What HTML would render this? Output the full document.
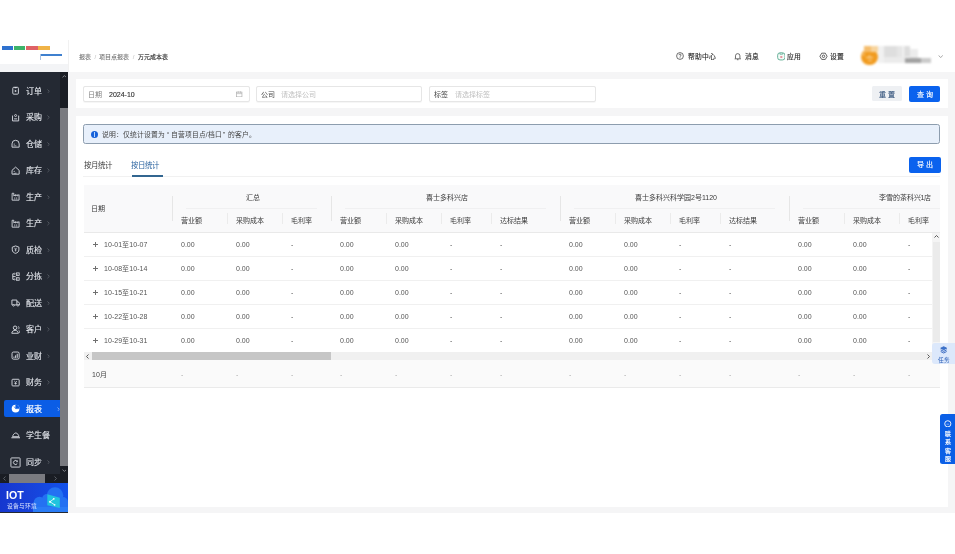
<!DOCTYPE html>
<html lang="zh-CN"><head><meta charset="utf-8">
<style>
*{box-sizing:border-box;margin:0;padding:0}
html,body{width:955px;height:554px;overflow:hidden;background:#fff}
body{position:relative;font-family:"Liberation Sans",sans-serif;color:#333}
.a{position:absolute}
.t{position:absolute;white-space:nowrap;line-height:1;will-change:transform}
.b{-webkit-text-stroke:0.2px currentColor}
svg.a{display:block}
</style></head><body>
<div class="a" style="left:0.00px;top:40.00px;width:955.00px;height:32.00px;background:#fff;"></div>
<div class="a" style="left:2.00px;top:45.60px;width:11.00px;height:4.20px;background:#2f72cf;"></div>
<div class="a" style="left:14.00px;top:45.60px;width:11.00px;height:4.20px;background:#3db36a;"></div>
<div class="a" style="left:26.00px;top:45.60px;width:11.50px;height:4.20px;background:#df6266;"></div>
<div class="a" style="left:38.00px;top:45.60px;width:12.00px;height:4.20px;background:#f0b347;"></div>
<div class="a" style="left:40.00px;top:54.40px;width:22.00px;height:1.40px;background:#3f80cf;"></div>
<div class="a" style="left:40.00px;top:54.40px;width:1.20px;height:5.50px;background:#a8c2e2;"></div>
<div class="a" style="left:0.00px;top:63.60px;width:68.00px;height:8.40px;background:#f3f4f6;"></div>
<div class="a" style="left:68.00px;top:40.00px;width:0.80px;height:32.00px;background:#f1f1f1;"></div>
<div class="t" style="left:78.50px;top:53.65px;font-size:6px;color:#727272;"><span style="-webkit-text-stroke:0.08px #727272">报表</span><span style="color:#bdbdbd;margin:0 3.3px 0 3.4px">/</span><span style="-webkit-text-stroke:0.08px #727272">项目点报表</span><span style="color:#bdbdbd;margin:0 3.3px 0 3.4px">/</span><span style="color:#1a1a1a;-webkit-text-stroke:0.1px #1a1a1a">万元成本表</span></div>
<svg class="a" style="left:675.60px;top:52.30px;" width="8" height="8" viewBox="0 0 16 16"><circle cx="8" cy="8" r="6.8" fill="none" stroke="#333333" stroke-width="1.4"/><path d="M5.9 6.3a2.1 2.1 0 1 1 2.8 2c-.5.2-.7.5-.7 1.1" fill="none" stroke="#333333" stroke-width="1.4"/><circle cx="8" cy="11.6" r=".9" fill="#333333"/></svg>
<div class="t" style="left:688.30px;top:53.85px;font-size:6.8px;color:#262626;"><span style="-webkit-text-stroke:0.12px #262626">帮助中心</span></div>
<svg class="a" style="left:734.30px;top:52.00px;" width="7.4" height="8.6" viewBox="0 0 16 18"><path d="M3.2 13.2V8a4.8 4.8 0 0 1 9.6 0v5.2l1.4 1.2H1.8z M6.3 16.4h3.4" fill="none" stroke="#333333" stroke-width="1.5" stroke-linejoin="round"/></svg>
<div class="t" style="left:744.90px;top:53.85px;font-size:6.8px;color:#262626;"><span style="-webkit-text-stroke:0.12px #262626">消息</span></div>
<svg class="a" style="left:776.70px;top:52.00px;" width="8.6" height="8.6" viewBox="0 0 16 16"><rect x="1.2" y="1.5" width="13.6" height="13.3" rx="4.5" fill="#f4fbf8" stroke="#5aaa90" stroke-width="1.7"/><path d="M5.5 1.8v2.4h5V1.8" fill="none" stroke="#5aaa90" stroke-width="1.3"/><ellipse cx="8" cy="9.3" rx="2.4" ry="1.3" fill="#e06a78"/></svg>
<div class="t" style="left:787.30px;top:53.85px;font-size:6.8px;color:#262626;"><span style="-webkit-text-stroke:0.12px #262626">应用</span></div>
<svg class="a" style="left:819.40px;top:51.60px;" width="9" height="8.6" viewBox="0 0 16 16"><path d="M1.3 8L4.65 2.2h6.7L14.7 8l-3.35 5.8h-6.7z" fill="none" stroke="#333333" stroke-width="1.4" stroke-linejoin="round"/><circle cx="8" cy="8" r="2.3" fill="none" stroke="#333333" stroke-width="1.4"/></svg>
<div class="t" style="left:830.20px;top:53.85px;font-size:6.8px;color:#262626;"><span style="-webkit-text-stroke:0.12px #262626">设置</span></div>
<div class="a" style="left:0;top:0;width:955px;height:80px;filter:blur(0.9px)">
<div class="a" style="left:861.20px;top:49.40px;width:16.40px;height:15.80px;background:#f19b1f;border-radius:50%"></div>
<div class="a" style="left:864.00px;top:46.20px;width:7.00px;height:6.00px;background:#f5bd6c;"></div>
<div class="a" style="left:871.00px;top:46.20px;width:6.50px;height:5.50px;background:#f8d49c;"></div>
<div class="a" style="left:861.50px;top:51.80px;width:3.50px;height:4.50px;background:#f4b04e;"></div>
<div class="a" style="left:866.00px;top:56.80px;width:7.20px;height:1.60px;background:#fde0ad;border-radius:1px"></div>
<div class="a" style="left:867.60px;top:59.60px;width:4.60px;height:1.40px;background:#fbd39a;border-radius:1px"></div>
<div class="a" style="left:868.90px;top:54.80px;width:1.50px;height:1.80px;background:#fbd39a;"></div>
<div class="a" style="left:877.60px;top:46.20px;width:6.80px;height:17.00px;background:#f1f1f1;"></div>
<div class="a" style="left:884.40px;top:46.20px;width:12.80px;height:11.20px;background:#dedede;"></div>
<div class="a" style="left:897.20px;top:46.20px;width:6.30px;height:11.20px;background:#e6e6e6;"></div>
<div class="a" style="left:903.50px;top:46.20px;width:6.50px;height:11.20px;background:#dddddd;"></div>
<div class="a" style="left:910.00px;top:48.50px;width:8.30px;height:9.00px;background:#ececec;"></div>
<div class="a" style="left:884.40px;top:57.40px;width:20.60px;height:6.00px;background:#ebebeb;"></div>
<div class="a" style="left:905.00px;top:58.20px;width:16.00px;height:5.20px;background:#a2a2a2;"></div>
<div class="a" style="left:921.00px;top:58.20px;width:10.40px;height:5.20px;background:#cbcbcb;"></div>
<div class="a" style="left:910.00px;top:57.40px;width:8.30px;height:0.80px;background:#e7e7e7;"></div>
</div>
<svg class="a" style="left:937.70px;top:54.60px;" width="5.4" height="3.4" viewBox="0 0 12 8"><path d="M1 1l5 5 5-5" fill="none" stroke="#7a7a7a" stroke-width="1.6"/></svg>
<div class="a" style="left:0.00px;top:72.00px;width:68.00px;height:440.50px;background:#242933;"></div>
<div class="a" style="left:60.00px;top:72.00px;width:8.00px;height:402.40px;background:#1a1d24;"></div>
<div class="a" style="left:60.00px;top:108.30px;width:8.00px;height:357.40px;background:#7a7b80;"></div>
<svg class="a" style="left:61.60px;top:74.80px;" width="4.8" height="3" viewBox="0 0 10 6"><path d="M1 5l4-4 4 4" fill="none" stroke="#8d9097" stroke-width="1.8"/></svg>
<svg class="a" style="left:61.60px;top:468.60px;" width="4.8" height="3" viewBox="0 0 10 6"><path d="M1 1l4 4 4-4" fill="none" stroke="#8d9097" stroke-width="1.8"/></svg>
<div class="a" style="left:0.00px;top:474.40px;width:68.00px;height:8.60px;background:#1a1d24;"></div>
<div class="a" style="left:8.90px;top:474.40px;width:36.30px;height:8.60px;background:#7a7b80;"></div>
<svg class="a" style="left:3.20px;top:476.30px;" width="3" height="5" viewBox="0 0 6 10"><path d="M5 1L1 5l4 4" fill="none" stroke="#5f636b" stroke-width="1.8"/></svg>
<svg class="a" style="left:54.00px;top:476.30px;" width="3" height="5" viewBox="0 0 6 10"><path d="M1 1l4 4-4 4" fill="none" stroke="#5f636b" stroke-width="1.8"/></svg>
<svg class="a" style="left:10.80px;top:86.40px;" width="9.2" height="9.2" viewBox="0 0 18 18"><rect x="3.5" y="2.5" width="11" height="13.5" rx="2" fill="none" stroke="#d9dce3" stroke-width="1.8"/><path d="M6.5 1.8h5l-.8 2.6H7.3z" fill="#d9dce3"/><path d="M7.5 7.5l4 2.3-4 2.3z" fill="#d9dce3"/></svg>
<div class="t" style="left:25.50px;top:87.95px;font-size:8px;color:#e4e7ed;"><span style="-webkit-text-stroke:0.1px #e4e7ed">订单</span></div>
<svg class="a" style="left:47.20px;top:88.70px;" width="2.8" height="4.6" viewBox="0 0 6 10"><path d="M1 1l4 4-4 4" fill="none" stroke="#6f747d" stroke-width="1.3"/></svg>
<svg class="a" style="left:10.80px;top:112.90px;" width="9.2" height="9.2" viewBox="0 0 18 18"><path d="M3 6.5v9h12v-9" fill="none" stroke="#d9dce3" stroke-width="1.8" stroke-linejoin="round"/><circle cx="3" cy="6" r="1.2" fill="#d9dce3"/><circle cx="15" cy="6" r="1.2" fill="#d9dce3"/><circle cx="9" cy="5" r="2" fill="none" stroke="#d9dce3" stroke-width="1.6"/><path d="M6 11.5h6" stroke="#d9dce3" stroke-width="1.8"/></svg>
<div class="t" style="left:25.50px;top:114.45px;font-size:8px;color:#e4e7ed;"><span style="-webkit-text-stroke:0.1px #e4e7ed">采购</span></div>
<svg class="a" style="left:47.20px;top:115.20px;" width="2.8" height="4.6" viewBox="0 0 6 10"><path d="M1 1l4 4-4 4" fill="none" stroke="#6f747d" stroke-width="1.3"/></svg>
<svg class="a" style="left:10.80px;top:139.40px;" width="9.2" height="9.2" viewBox="0 0 18 18"><path d="M2 16V9.5a7 7 0 0 1 14 0V16z" fill="none" stroke="#d9dce3" stroke-width="1.8" stroke-linejoin="round"/><circle cx="6.2" cy="10" r="1.1" fill="#d9dce3"/><circle cx="6.2" cy="13.2" r="1.1" fill="#d9dce3"/><circle cx="9.4" cy="13.2" r="1.1" fill="#d9dce3"/></svg>
<div class="t" style="left:25.50px;top:140.95px;font-size:8px;color:#e4e7ed;"><span style="-webkit-text-stroke:0.1px #e4e7ed">仓储</span></div>
<svg class="a" style="left:47.20px;top:141.70px;" width="2.8" height="4.6" viewBox="0 0 6 10"><path d="M1 1l4 4-4 4" fill="none" stroke="#6f747d" stroke-width="1.3"/></svg>
<svg class="a" style="left:10.80px;top:165.90px;" width="9.2" height="9.2" viewBox="0 0 18 18"><path d="M2 16V8.5L9 2.2l7 6.3V16z" fill="none" stroke="#d9dce3" stroke-width="1.8" stroke-linejoin="round"/><circle cx="6.2" cy="10.5" r="1.1" fill="#d9dce3"/><path d="M6.2 16v-2.5M9.5 16v-3" stroke="#d9dce3" stroke-width="1.6"/></svg>
<div class="t" style="left:25.50px;top:167.45px;font-size:8px;color:#e4e7ed;"><span style="-webkit-text-stroke:0.1px #e4e7ed">库存</span></div>
<svg class="a" style="left:47.20px;top:168.20px;" width="2.8" height="4.6" viewBox="0 0 6 10"><path d="M1 1l4 4-4 4" fill="none" stroke="#6f747d" stroke-width="1.3"/></svg>
<svg class="a" style="left:10.80px;top:192.40px;" width="9.2" height="9.2" viewBox="0 0 18 18"><path d="M2.2 16V2.5h3.3v5.3l3.4-2.6v2.6l3.4-2.6v2.6l3.5-2.6V16z" fill="none" stroke="#d9dce3" stroke-width="1.7" stroke-linejoin="round"/><path d="M6.2 11.6h2.2M10 11.6h2.2M6.2 13.6h2.2M10 13.6h2.2" stroke="#d9dce3" stroke-width="1.3"/></svg>
<div class="t" style="left:25.50px;top:193.95px;font-size:8px;color:#e4e7ed;"><span style="-webkit-text-stroke:0.1px #e4e7ed">生产</span></div>
<svg class="a" style="left:47.20px;top:194.70px;" width="2.8" height="4.6" viewBox="0 0 6 10"><path d="M1 1l4 4-4 4" fill="none" stroke="#6f747d" stroke-width="1.3"/></svg>
<svg class="a" style="left:10.80px;top:218.90px;" width="9.2" height="9.2" viewBox="0 0 18 18"><path d="M2.2 16V2.5h3.3v5.3l3.4-2.6v2.6l3.4-2.6v2.6l3.5-2.6V16z" fill="none" stroke="#d9dce3" stroke-width="1.7" stroke-linejoin="round"/><path d="M6.2 11.6h2.2M10 11.6h2.2M6.2 13.6h2.2M10 13.6h2.2" stroke="#d9dce3" stroke-width="1.3"/></svg>
<div class="t" style="left:25.50px;top:220.45px;font-size:8px;color:#e4e7ed;"><span style="-webkit-text-stroke:0.1px #e4e7ed">生产</span></div>
<svg class="a" style="left:47.20px;top:221.20px;" width="2.8" height="4.6" viewBox="0 0 6 10"><path d="M1 1l4 4-4 4" fill="none" stroke="#6f747d" stroke-width="1.3"/></svg>
<svg class="a" style="left:10.80px;top:245.40px;" width="9.2" height="9.2" viewBox="0 0 18 18"><path d="M9 1.8l6.5 2.4v5.2c0 3.8-2.9 6-6.5 7-3.6-1-6.5-3.2-6.5-7V4.2z" fill="none" stroke="#d9dce3" stroke-width="1.8"/><path d="M7 5.5l2 3.2 2-3.2M9 8.7v4M7.2 9.8h3.6" fill="none" stroke="#d9dce3" stroke-width="1.4"/></svg>
<div class="t" style="left:25.50px;top:246.95px;font-size:8px;color:#e4e7ed;"><span style="-webkit-text-stroke:0.1px #e4e7ed">质检</span></div>
<svg class="a" style="left:47.20px;top:247.70px;" width="2.8" height="4.6" viewBox="0 0 6 10"><path d="M1 1l4 4-4 4" fill="none" stroke="#6f747d" stroke-width="1.3"/></svg>
<svg class="a" style="left:10.80px;top:271.90px;" width="9.2" height="9.2" viewBox="0 0 18 18"><path d="M7 3.5H3.5v11H7M3.5 9H9" fill="none" stroke="#d9dce3" stroke-width="1.8"/><path d="M6.5 2l2 1.5-2 1.5M6.5 13l2 1.5-2 1.5" fill="none" stroke="#d9dce3" stroke-width="1.3"/><rect x="10.5" y="1.8" width="5.5" height="5" fill="none" stroke="#d9dce3" stroke-width="1.6"/><rect x="10.5" y="11.2" width="5.5" height="5" fill="none" stroke="#d9dce3" stroke-width="1.6"/><circle cx="13.2" cy="4.3" r=".9" fill="#d9dce3"/><circle cx="13.2" cy="13.7" r=".9" fill="#d9dce3"/></svg>
<div class="t" style="left:25.50px;top:273.45px;font-size:8px;color:#e4e7ed;"><span style="-webkit-text-stroke:0.1px #e4e7ed">分拣</span></div>
<svg class="a" style="left:47.20px;top:274.20px;" width="2.8" height="4.6" viewBox="0 0 6 10"><path d="M1 1l4 4-4 4" fill="none" stroke="#6f747d" stroke-width="1.3"/></svg>
<svg class="a" style="left:10.80px;top:298.40px;" width="9.2" height="9.2" viewBox="0 0 18 18"><path d="M1.8 4h9.7v9.5H1.8z M11.5 7.5h3l2 2.8v3.2h-5" fill="none" stroke="#d9dce3" stroke-width="1.8" stroke-linejoin="round"/><circle cx="5" cy="14.5" r="1.6" fill="#242933" stroke="#d9dce3" stroke-width="1.5"/><circle cx="13.5" cy="14.5" r="1.6" fill="#242933" stroke="#d9dce3" stroke-width="1.5"/></svg>
<div class="t" style="left:25.50px;top:299.95px;font-size:8px;color:#e4e7ed;"><span style="-webkit-text-stroke:0.1px #e4e7ed">配送</span></div>
<svg class="a" style="left:47.20px;top:300.70px;" width="2.8" height="4.6" viewBox="0 0 6 10"><path d="M1 1l4 4-4 4" fill="none" stroke="#6f747d" stroke-width="1.3"/></svg>
<svg class="a" style="left:10.80px;top:324.90px;" width="9.2" height="9.2" viewBox="0 0 18 18"><circle cx="8" cy="5.5" r="3.5" fill="none" stroke="#d9dce3" stroke-width="1.8"/><path d="M1.5 16.2c.5-3.5 3-5.8 6.5-5.8s6 2.3 6.5 5.8z" fill="none" stroke="#d9dce3" stroke-width="1.8" stroke-linejoin="round"/><path d="M14.2 2.5c2 1.2 2 4.5 0 5.8M15.5 10.5c1.2.9 1.6 2.8 1.6 5" fill="none" stroke="#d9dce3" stroke-width="1.5"/></svg>
<div class="t" style="left:25.50px;top:326.45px;font-size:8px;color:#e4e7ed;"><span style="-webkit-text-stroke:0.1px #e4e7ed">客户</span></div>
<svg class="a" style="left:47.20px;top:327.20px;" width="2.8" height="4.6" viewBox="0 0 6 10"><path d="M1 1l4 4-4 4" fill="none" stroke="#6f747d" stroke-width="1.3"/></svg>
<svg class="a" style="left:10.80px;top:351.40px;" width="9.2" height="9.2" viewBox="0 0 18 18"><rect x="2" y="2" width="14" height="14" rx="3" fill="none" stroke="#d9dce3" stroke-width="1.8"/><path d="M5.8 13.5v-2.5M9 13.5V8.5M12.2 13.5V5.5" stroke="#d9dce3" stroke-width="1.9"/></svg>
<div class="t" style="left:25.50px;top:352.95px;font-size:8px;color:#e4e7ed;"><span style="-webkit-text-stroke:0.1px #e4e7ed">业财</span></div>
<svg class="a" style="left:47.20px;top:353.70px;" width="2.8" height="4.6" viewBox="0 0 6 10"><path d="M1 1l4 4-4 4" fill="none" stroke="#6f747d" stroke-width="1.3"/></svg>
<svg class="a" style="left:10.80px;top:377.90px;" width="9.2" height="9.2" viewBox="0 0 18 18"><rect x="2" y="2.5" width="14" height="13" rx="1.5" fill="none" stroke="#d9dce3" stroke-width="1.8"/><path d="M6.5 6l2.5 2.5L11.5 6M9 8.5v4.5M6.5 10.5h5" fill="none" stroke="#d9dce3" stroke-width="1.6"/></svg>
<div class="t" style="left:25.50px;top:379.45px;font-size:8px;color:#e4e7ed;"><span style="-webkit-text-stroke:0.1px #e4e7ed">财务</span></div>
<svg class="a" style="left:47.20px;top:380.20px;" width="2.8" height="4.6" viewBox="0 0 6 10"><path d="M1 1l4 4-4 4" fill="none" stroke="#6f747d" stroke-width="1.3"/></svg>
<div class="a" style="left:4.30px;top:400.40px;width:55.70px;height:16.80px;background:#0b5de6;border-radius:2px 0 0 2px"></div>
<svg class="a" style="left:10.80px;top:404.40px;" width="9.2" height="9.2" viewBox="0 0 18 18"><circle cx="9" cy="9" r="7.6" fill="#ffffff"/><path d="M9.8 9V1.6A7.4 7.4 0 0 1 16.4 8.2z" fill="#0b5de6"/><path d="M9 9h7.8M9 9V1.2M9 9l-3 -4" stroke="#0b5de6" stroke-width="1.3"/></svg>
<div class="t" style="left:25.50px;top:405.95px;font-size:8px;color:#ffffff;"><span style="-webkit-text-stroke:0.22px #ffffff">报表</span></div>
<svg class="a" style="left:57.00px;top:406.70px;" width="2.8" height="4.6" viewBox="0 0 6 10"><path d="M1 1l4 4-4 4" fill="none" stroke="#cfdcf8" stroke-width="1.3"/></svg>
<svg class="a" style="left:10.60px;top:429.80px;" width="9.6" height="9.6" viewBox="0 0 18 18"><path d="M3 12.5C3.5 9 6 6 9 5.5c3 .5 5.5 3.5 6 7z" fill="none" stroke="#d9dce3" stroke-width="1.7" stroke-linejoin="round"/><path d="M1.5 14.6h15" stroke="#d9dce3" stroke-width="2.2" stroke-linecap="round"/></svg>
<div class="t" style="left:25.50px;top:432.45px;font-size:8px;color:#e4e7ed;"><span style="-webkit-text-stroke:0.1px #e4e7ed">学生餐</span></div>
<svg class="a" style="left:10.00px;top:456.70px;" width="11" height="11" viewBox="0 0 18 18"><rect x="1.5" y="1.5" width="15" height="15" rx="1" fill="none" stroke="#d9dce3" stroke-width="1.5"/><path d="M11.9 7.3A3.3 3.3 0 1 0 11.9 10.7" fill="none" stroke="#d9dce3" stroke-width="1.5"/><path d="M10.2 7.6h2.1V5.5" fill="none" stroke="#d9dce3" stroke-width="1.2"/></svg>
<div class="t" style="left:25.50px;top:458.95px;font-size:8px;color:#e4e7ed;"><span style="-webkit-text-stroke:0.1px #e4e7ed">同步</span></div>
<svg class="a" style="left:47.20px;top:459.70px;" width="2.8" height="4.6" viewBox="0 0 6 10"><path d="M1 1l4 4-4 4" fill="none" stroke="#6f747d" stroke-width="1.3"/></svg>
<div class="a" style="left:0;top:482.9px;width:68px;height:29.6px;background:linear-gradient(90deg,#1637cf 0%,#1742da 45%,#1352ea 100%);overflow:hidden"><svg class="a" style="left:0;top:0;filter:blur(0.3px)" width="68" height="30" viewBox="0 0 68 30"><g fill="#2471f2"><circle cx="55" cy="12.5" r="8.3"/><circle cx="39.5" cy="19.5" r="5.8"/><circle cx="47" cy="16" r="5"/><rect x="33.5" y="19" width="34.5" height="11"/><circle cx="63" cy="19" r="5"/></g><rect x="33" y="24" width="35" height="6" fill="#2a7cf6"/><path d="M47.3 11.2l12.5 3.5V25l-12.5-2.7z" fill="#20c4de"/><path d="M53.8 15.8L50 18.8l4.6 3" fill="none" stroke="#d9f7ff" stroke-width=".9"/><circle cx="50" cy="18.8" r="1.1" fill="#e9fbff"/><circle cx="53.8" cy="15.8" r=".9" fill="#e9fbff"/><circle cx="54.6" cy="21.8" r=".9" fill="#e9fbff"/></svg><div class="t" style="left:6.1px;top:7.1px;font-size:10.6px;line-height:1;font-weight:bold;color:#fff">IOT</div><div class="t" style="left:6.5px;top:21.2px;font-size:5.75px;line-height:1;color:#dfe7ff">设备与环境</div></div>
<div class="a" style="left:68.00px;top:72.00px;width:887.00px;height:440.50px;background:#f5f5f6;"></div>
<div class="a" style="left:76.00px;top:79.40px;width:872.00px;height:28.90px;background:#fff;"></div>
<div class="a" style="left:83.40px;top:86.10px;width:166.60px;height:16.40px;background:#fff;border:1px solid #e6e6e6;border-radius:2px;box-sizing:border-box;box-shadow:0 0.5px 0.8px rgba(0,0,0,.04)"></div>
<div class="t" style="left:88.00px;top:91.05px;font-size:7px;color:#808080;">日期</div>
<div class="t" style="left:108.60px;top:91.05px;font-size:7px;color:#2e2e2e;"><span style="-webkit-text-stroke:0.12px #2e2e2e">2024-10</span></div>
<svg class="a" style="left:236.20px;top:90.60px;" width="6.6" height="6.4" viewBox="0 0 12 12"><rect x="1" y="2" width="10" height="9" fill="none" stroke="#a8a8a8" stroke-width="1.2"/><path d="M1 5h10M4 .5v3M8 .5v3" stroke="#a8a8a8" stroke-width="1.2"/></svg>
<div class="a" style="left:255.70px;top:86.10px;width:166.60px;height:16.40px;background:#fff;border:1px solid #e6e6e6;border-radius:2px;box-sizing:border-box;box-shadow:0 0.5px 0.8px rgba(0,0,0,.04)"></div>
<div class="t" style="left:260.80px;top:91.05px;font-size:7px;color:#4a4a4a;">公司</div>
<div class="t" style="left:280.90px;top:91.05px;font-size:7px;color:#bfbfbf;">请选择公司</div>
<div class="a" style="left:429.00px;top:86.10px;width:166.60px;height:16.40px;background:#fff;border:1px solid #e6e6e6;border-radius:2px;box-sizing:border-box;box-shadow:0 0.5px 0.8px rgba(0,0,0,.04)"></div>
<div class="t" style="left:434.10px;top:91.05px;font-size:7px;color:#4a4a4a;">标签</div>
<div class="t" style="left:454.90px;top:91.05px;font-size:7px;color:#bfbfbf;">请选择标签</div>
<div class="a" style="left:872.00px;top:86.20px;width:30.30px;height:15.30px;background:#eef0f3;border-radius:1.5px"></div>
<div class="t" style="left:879.00px;top:91.25px;font-size:7px;color:#3c5a80;letter-spacing:2.3px;-webkit-text-stroke:0.15px currentColor">重置</div>
<div class="a" style="left:909.00px;top:86.20px;width:31.30px;height:15.40px;background:#0a62ee;border-radius:2px"></div>
<div class="t" style="left:916.60px;top:91.25px;font-size:7px;color:#fff;letter-spacing:2.3px;-webkit-text-stroke:0.15px currentColor">查询</div>
<div class="a" style="left:76.00px;top:116.00px;width:872.00px;height:391.20px;background:#fff;"></div>
<div class="a" style="left:83.00px;top:124.20px;width:857.40px;height:20.20px;background:#e8f0fb;border:1px solid #8d9dae;border-radius:2.5px;box-sizing:border-box"></div>
<div class="a" style="left:90.90px;top:131.00px;width:7.00px;height:7.00px;background:#1761d9;border-radius:50%"></div>
<div class="a" style="left:94.05px;top:133.20px;width:0.80px;height:3.40px;background:#b9d6fb;"></div>
<div class="a" style="left:94.05px;top:132.10px;width:0.80px;height:0.70px;background:#b9d6fb;"></div>
<div class="t" style="left:101.80px;top:131.95px;font-size:6.8px;color:#444;">说明：仅统计设置为<span style="margin:0 1.6px 0 2px">“</span>自营项目点/档口<span style="margin:0 2.5px 0 1.2px">”</span>的客户。</div>
<div class="t" style="left:83.80px;top:162.05px;font-size:7.45px;color:#3c3c3c;">按月统计</div>
<div class="t" style="left:131.20px;top:162.05px;font-size:7.45px;color:#2b64a0;">按日统计</div>
<div class="a" style="left:83.00px;top:176.20px;width:857.40px;height:0.80px;background:#f1f1f1;"></div>
<div class="a" style="left:131.50px;top:175.00px;width:31.50px;height:2.00px;background:#326690;"></div>
<div class="a" style="left:909.20px;top:157.00px;width:31.70px;height:15.50px;background:#0a62ee;border-radius:2px"></div>
<div class="t" style="left:917.30px;top:161.45px;font-size:7px;color:#fff;letter-spacing:2.3px;-webkit-text-stroke:0.15px currentColor">导出</div>
<div class="a" style="left:83.2px;top:184.4px;width:857.3px;height:204px;overflow:hidden">
<div class="a" style="left:0.40px;top:0.20px;width:856.90px;height:47.90px;background:#f9f9fa;"></div>
<div class="a" style="left:0.40px;top:47.60px;width:856.90px;height:0.80px;background:#e9e9e9;"></div>
<div class="t" style="left:8.20px;top:21.05px;font-size:7px;color:#3a3a3a;">日期</div>
<div class="a" style="left:89.10px;top:11.70px;width:0.80px;height:25.30px;background:#e6e6e6;"></div>
<div class="t" style="left:69.40px;top:9.45px;width:200px;text-align:center;font-size:7px;color:#3a3a3a;">汇总</div>
<div class="a" style="left:103.30px;top:23.90px;width:131.00px;height:0.70px;background:#f0f0f1;"></div>
<div class="t" style="left:97.90px;top:32.85px;font-size:7px;color:#3a3a3a;">营业额</div>
<div class="a" style="left:144.20px;top:28.90px;width:0.80px;height:10.80px;background:#ebebeb;"></div>
<div class="t" style="left:153.00px;top:32.85px;font-size:7px;color:#3a3a3a;">采购成本</div>
<div class="a" style="left:199.30px;top:28.90px;width:0.80px;height:10.80px;background:#ebebeb;"></div>
<div class="t" style="left:208.10px;top:32.85px;font-size:7px;color:#3a3a3a;">毛利率</div>
<div class="a" style="left:248.10px;top:11.70px;width:0.80px;height:25.30px;background:#e6e6e6;"></div>
<div class="t" style="left:263.40px;top:9.45px;width:200px;text-align:center;font-size:7px;color:#3a3a3a;">喜士多科兴店</div>
<div class="a" style="left:262.30px;top:23.90px;width:201.00px;height:0.70px;background:#f0f0f1;"></div>
<div class="t" style="left:256.90px;top:32.85px;font-size:7px;color:#3a3a3a;">营业额</div>
<div class="a" style="left:303.10px;top:28.90px;width:0.80px;height:10.80px;background:#ebebeb;"></div>
<div class="t" style="left:311.90px;top:32.85px;font-size:7px;color:#3a3a3a;">采购成本</div>
<div class="a" style="left:358.10px;top:28.90px;width:0.80px;height:10.80px;background:#ebebeb;"></div>
<div class="t" style="left:366.90px;top:32.85px;font-size:7px;color:#3a3a3a;">毛利率</div>
<div class="a" style="left:408.10px;top:28.90px;width:0.80px;height:10.80px;background:#ebebeb;"></div>
<div class="t" style="left:416.90px;top:32.85px;font-size:7px;color:#3a3a3a;">达标结果</div>
<div class="a" style="left:477.10px;top:11.70px;width:0.80px;height:25.30px;background:#e6e6e6;"></div>
<div class="t" style="left:492.40px;top:9.45px;width:200px;text-align:center;font-size:7px;color:#3a3a3a;">喜士多科兴科学园2号1120</div>
<div class="a" style="left:491.30px;top:23.90px;width:201.00px;height:0.70px;background:#f0f0f1;"></div>
<div class="t" style="left:485.90px;top:32.85px;font-size:7px;color:#3a3a3a;">营业额</div>
<div class="a" style="left:532.10px;top:28.90px;width:0.80px;height:10.80px;background:#ebebeb;"></div>
<div class="t" style="left:540.90px;top:32.85px;font-size:7px;color:#3a3a3a;">采购成本</div>
<div class="a" style="left:587.10px;top:28.90px;width:0.80px;height:10.80px;background:#ebebeb;"></div>
<div class="t" style="left:595.90px;top:32.85px;font-size:7px;color:#3a3a3a;">毛利率</div>
<div class="a" style="left:637.10px;top:28.90px;width:0.80px;height:10.80px;background:#ebebeb;"></div>
<div class="t" style="left:645.90px;top:32.85px;font-size:7px;color:#3a3a3a;">达标结果</div>
<div class="a" style="left:706.10px;top:11.70px;width:0.80px;height:25.30px;background:#e6e6e6;"></div>
<div class="t" style="left:721.40px;top:9.45px;width:200px;text-align:center;font-size:7px;color:#3a3a3a;">李雪的茶科兴1店</div>
<div class="a" style="left:720.30px;top:23.90px;width:201.00px;height:0.70px;background:#f0f0f1;"></div>
<div class="t" style="left:714.90px;top:32.85px;font-size:7px;color:#3a3a3a;">营业额</div>
<div class="a" style="left:761.10px;top:28.90px;width:0.80px;height:10.80px;background:#ebebeb;"></div>
<div class="t" style="left:769.90px;top:32.85px;font-size:7px;color:#3a3a3a;">采购成本</div>
<div class="a" style="left:816.10px;top:28.90px;width:0.80px;height:10.80px;background:#ebebeb;"></div>
<div class="t" style="left:824.90px;top:32.85px;font-size:7px;color:#3a3a3a;">毛利率</div>
<div class="a" style="left:866.10px;top:28.90px;width:0.80px;height:10.80px;background:#ebebeb;"></div>
<div class="t" style="left:874.90px;top:32.85px;font-size:7px;color:#3a3a3a;">达标结果</div>
<div class="a" style="left:10.20px;top:59.80px;width:4.40px;height:0.60px;background:#707070;"></div>
<div class="a" style="left:12.10px;top:57.90px;width:0.60px;height:4.40px;background:#707070;"></div>
<div class="t" style="left:21.30px;top:56.55px;font-size:7px;color:#555;"><span style="letter-spacing:0.06px">10-01至10-07</span></div>
<div class="t" style="left:97.90px;top:56.55px;font-size:7px;color:#555;">0.00</div>
<div class="t" style="left:153.00px;top:56.55px;font-size:7px;color:#555;">0.00</div>
<div class="t" style="left:208.10px;top:56.55px;font-size:7px;color:#555;">-</div>
<div class="t" style="left:256.90px;top:56.55px;font-size:7px;color:#555;">0.00</div>
<div class="t" style="left:311.90px;top:56.55px;font-size:7px;color:#555;">0.00</div>
<div class="t" style="left:366.90px;top:56.55px;font-size:7px;color:#555;">-</div>
<div class="t" style="left:416.90px;top:56.55px;font-size:7px;color:#555;">-</div>
<div class="t" style="left:485.90px;top:56.55px;font-size:7px;color:#555;">0.00</div>
<div class="t" style="left:540.90px;top:56.55px;font-size:7px;color:#555;">0.00</div>
<div class="t" style="left:595.90px;top:56.55px;font-size:7px;color:#555;">-</div>
<div class="t" style="left:645.90px;top:56.55px;font-size:7px;color:#555;">-</div>
<div class="t" style="left:714.90px;top:56.55px;font-size:7px;color:#555;">0.00</div>
<div class="t" style="left:769.90px;top:56.55px;font-size:7px;color:#555;">0.00</div>
<div class="t" style="left:824.90px;top:56.55px;font-size:7px;color:#555;">-</div>
<div class="t" style="left:874.90px;top:56.55px;font-size:7px;color:#555;">-</div>
<div class="a" style="left:0.40px;top:71.90px;width:848.90px;height:0.80px;background:#f0f0f0;"></div>
<div class="a" style="left:10.20px;top:83.80px;width:4.40px;height:0.60px;background:#707070;"></div>
<div class="a" style="left:12.10px;top:81.90px;width:0.60px;height:4.40px;background:#707070;"></div>
<div class="t" style="left:21.30px;top:80.55px;font-size:7px;color:#555;"><span style="letter-spacing:0.06px">10-08至10-14</span></div>
<div class="t" style="left:97.90px;top:80.55px;font-size:7px;color:#555;">0.00</div>
<div class="t" style="left:153.00px;top:80.55px;font-size:7px;color:#555;">0.00</div>
<div class="t" style="left:208.10px;top:80.55px;font-size:7px;color:#555;">-</div>
<div class="t" style="left:256.90px;top:80.55px;font-size:7px;color:#555;">0.00</div>
<div class="t" style="left:311.90px;top:80.55px;font-size:7px;color:#555;">0.00</div>
<div class="t" style="left:366.90px;top:80.55px;font-size:7px;color:#555;">-</div>
<div class="t" style="left:416.90px;top:80.55px;font-size:7px;color:#555;">-</div>
<div class="t" style="left:485.90px;top:80.55px;font-size:7px;color:#555;">0.00</div>
<div class="t" style="left:540.90px;top:80.55px;font-size:7px;color:#555;">0.00</div>
<div class="t" style="left:595.90px;top:80.55px;font-size:7px;color:#555;">-</div>
<div class="t" style="left:645.90px;top:80.55px;font-size:7px;color:#555;">-</div>
<div class="t" style="left:714.90px;top:80.55px;font-size:7px;color:#555;">0.00</div>
<div class="t" style="left:769.90px;top:80.55px;font-size:7px;color:#555;">0.00</div>
<div class="t" style="left:824.90px;top:80.55px;font-size:7px;color:#555;">-</div>
<div class="t" style="left:874.90px;top:80.55px;font-size:7px;color:#555;">-</div>
<div class="a" style="left:0.40px;top:95.90px;width:848.90px;height:0.80px;background:#f0f0f0;"></div>
<div class="a" style="left:10.20px;top:107.80px;width:4.40px;height:0.60px;background:#707070;"></div>
<div class="a" style="left:12.10px;top:105.90px;width:0.60px;height:4.40px;background:#707070;"></div>
<div class="t" style="left:21.30px;top:104.55px;font-size:7px;color:#555;"><span style="letter-spacing:0.06px">10-15至10-21</span></div>
<div class="t" style="left:97.90px;top:104.55px;font-size:7px;color:#555;">0.00</div>
<div class="t" style="left:153.00px;top:104.55px;font-size:7px;color:#555;">0.00</div>
<div class="t" style="left:208.10px;top:104.55px;font-size:7px;color:#555;">-</div>
<div class="t" style="left:256.90px;top:104.55px;font-size:7px;color:#555;">0.00</div>
<div class="t" style="left:311.90px;top:104.55px;font-size:7px;color:#555;">0.00</div>
<div class="t" style="left:366.90px;top:104.55px;font-size:7px;color:#555;">-</div>
<div class="t" style="left:416.90px;top:104.55px;font-size:7px;color:#555;">-</div>
<div class="t" style="left:485.90px;top:104.55px;font-size:7px;color:#555;">0.00</div>
<div class="t" style="left:540.90px;top:104.55px;font-size:7px;color:#555;">0.00</div>
<div class="t" style="left:595.90px;top:104.55px;font-size:7px;color:#555;">-</div>
<div class="t" style="left:645.90px;top:104.55px;font-size:7px;color:#555;">-</div>
<div class="t" style="left:714.90px;top:104.55px;font-size:7px;color:#555;">0.00</div>
<div class="t" style="left:769.90px;top:104.55px;font-size:7px;color:#555;">0.00</div>
<div class="t" style="left:824.90px;top:104.55px;font-size:7px;color:#555;">-</div>
<div class="t" style="left:874.90px;top:104.55px;font-size:7px;color:#555;">-</div>
<div class="a" style="left:0.40px;top:119.90px;width:848.90px;height:0.80px;background:#f0f0f0;"></div>
<div class="a" style="left:10.20px;top:131.80px;width:4.40px;height:0.60px;background:#707070;"></div>
<div class="a" style="left:12.10px;top:129.90px;width:0.60px;height:4.40px;background:#707070;"></div>
<div class="t" style="left:21.30px;top:128.55px;font-size:7px;color:#555;"><span style="letter-spacing:0.06px">10-22至10-28</span></div>
<div class="t" style="left:97.90px;top:128.55px;font-size:7px;color:#555;">0.00</div>
<div class="t" style="left:153.00px;top:128.55px;font-size:7px;color:#555;">0.00</div>
<div class="t" style="left:208.10px;top:128.55px;font-size:7px;color:#555;">-</div>
<div class="t" style="left:256.90px;top:128.55px;font-size:7px;color:#555;">0.00</div>
<div class="t" style="left:311.90px;top:128.55px;font-size:7px;color:#555;">0.00</div>
<div class="t" style="left:366.90px;top:128.55px;font-size:7px;color:#555;">-</div>
<div class="t" style="left:416.90px;top:128.55px;font-size:7px;color:#555;">-</div>
<div class="t" style="left:485.90px;top:128.55px;font-size:7px;color:#555;">0.00</div>
<div class="t" style="left:540.90px;top:128.55px;font-size:7px;color:#555;">0.00</div>
<div class="t" style="left:595.90px;top:128.55px;font-size:7px;color:#555;">-</div>
<div class="t" style="left:645.90px;top:128.55px;font-size:7px;color:#555;">-</div>
<div class="t" style="left:714.90px;top:128.55px;font-size:7px;color:#555;">0.00</div>
<div class="t" style="left:769.90px;top:128.55px;font-size:7px;color:#555;">0.00</div>
<div class="t" style="left:824.90px;top:128.55px;font-size:7px;color:#555;">-</div>
<div class="t" style="left:874.90px;top:128.55px;font-size:7px;color:#555;">-</div>
<div class="a" style="left:0.40px;top:143.90px;width:848.90px;height:0.80px;background:#f0f0f0;"></div>
<div class="a" style="left:10.20px;top:155.80px;width:4.40px;height:0.60px;background:#707070;"></div>
<div class="a" style="left:12.10px;top:153.90px;width:0.60px;height:4.40px;background:#707070;"></div>
<div class="t" style="left:21.30px;top:152.55px;font-size:7px;color:#555;"><span style="letter-spacing:0.06px">10-29至10-31</span></div>
<div class="t" style="left:97.90px;top:152.55px;font-size:7px;color:#555;">0.00</div>
<div class="t" style="left:153.00px;top:152.55px;font-size:7px;color:#555;">0.00</div>
<div class="t" style="left:208.10px;top:152.55px;font-size:7px;color:#555;">-</div>
<div class="t" style="left:256.90px;top:152.55px;font-size:7px;color:#555;">0.00</div>
<div class="t" style="left:311.90px;top:152.55px;font-size:7px;color:#555;">0.00</div>
<div class="t" style="left:366.90px;top:152.55px;font-size:7px;color:#555;">-</div>
<div class="t" style="left:416.90px;top:152.55px;font-size:7px;color:#555;">-</div>
<div class="t" style="left:485.90px;top:152.55px;font-size:7px;color:#555;">0.00</div>
<div class="t" style="left:540.90px;top:152.55px;font-size:7px;color:#555;">0.00</div>
<div class="t" style="left:595.90px;top:152.55px;font-size:7px;color:#555;">-</div>
<div class="t" style="left:645.90px;top:152.55px;font-size:7px;color:#555;">-</div>
<div class="t" style="left:714.90px;top:152.55px;font-size:7px;color:#555;">0.00</div>
<div class="t" style="left:769.90px;top:152.55px;font-size:7px;color:#555;">0.00</div>
<div class="t" style="left:824.90px;top:152.55px;font-size:7px;color:#555;">-</div>
<div class="t" style="left:874.90px;top:152.55px;font-size:7px;color:#555;">-</div>
<div class="a" style="left:849.30px;top:48.40px;width:8.00px;height:119.00px;background:#f4f4f4;"></div>
<div class="a" style="left:850.00px;top:57.60px;width:6.60px;height:100.00px;background:#ebebeb;"></div>
<svg class="a" style="left:850.80px;top:50.40px;" width="5" height="3" viewBox="0 0 10 6"><path d="M1 5l4-4 4 4" fill="none" stroke="#505050" stroke-width="1.9"/></svg>
<div class="a" style="left:1.00px;top:167.20px;width:848.30px;height:8.80px;background:#f0f0f0;"></div>
<div class="a" style="left:8.80px;top:167.20px;width:239.00px;height:8.80px;background:#c6c6c6;"></div>
<svg class="a" style="left:3.00px;top:169.20px;" width="3" height="5" viewBox="0 0 6 10"><path d="M5 1L1 5l4 4" fill="none" stroke="#505050" stroke-width="1.9"/></svg>
<svg class="a" style="left:844.10px;top:169.20px;" width="3" height="5" viewBox="0 0 6 10"><path d="M1 1l4 4-4 4" fill="none" stroke="#505050" stroke-width="1.9"/></svg>
<div class="a" style="left:0.80px;top:176.00px;width:856.50px;height:26.90px;background:#fafafa;"></div>
<div class="a" style="left:0.80px;top:202.60px;width:856.50px;height:0.80px;background:#eaeaea;"></div>
<div class="t" style="left:8.80px;top:186.25px;font-size:7px;color:#444;">10月</div>
<div class="t" style="left:97.90px;top:186.25px;font-size:7px;color:#aaa;">-</div>
<div class="t" style="left:153.00px;top:186.25px;font-size:7px;color:#aaa;">-</div>
<div class="t" style="left:208.10px;top:186.25px;font-size:7px;color:#aaa;">-</div>
<div class="t" style="left:256.90px;top:186.25px;font-size:7px;color:#aaa;">-</div>
<div class="t" style="left:311.90px;top:186.25px;font-size:7px;color:#aaa;">-</div>
<div class="t" style="left:366.90px;top:186.25px;font-size:7px;color:#aaa;">-</div>
<div class="t" style="left:416.90px;top:186.25px;font-size:7px;color:#aaa;">-</div>
<div class="t" style="left:485.90px;top:186.25px;font-size:7px;color:#aaa;">-</div>
<div class="t" style="left:540.90px;top:186.25px;font-size:7px;color:#aaa;">-</div>
<div class="t" style="left:595.90px;top:186.25px;font-size:7px;color:#aaa;">-</div>
<div class="t" style="left:645.90px;top:186.25px;font-size:7px;color:#aaa;">-</div>
<div class="t" style="left:714.90px;top:186.25px;font-size:7px;color:#aaa;">-</div>
<div class="t" style="left:769.90px;top:186.25px;font-size:7px;color:#aaa;">-</div>
<div class="t" style="left:824.90px;top:186.25px;font-size:7px;color:#aaa;">-</div>
<div class="t" style="left:874.90px;top:186.25px;font-size:7px;color:#aaa;">-</div>
</div>
<div class="a" style="left:931.60px;top:342.90px;width:23.40px;height:20.80px;background:#dce8fb;border-radius:3px 0 0 3px"></div>
<svg class="a" style="left:939.80px;top:346.00px;" width="7.4" height="7.8" viewBox="0 0 16 17"><path d="M8 1.5l6.5 3.3L8 8.1 1.5 4.8z" fill="#3a74d0" stroke="#2f63bd" stroke-width="1.8" stroke-linejoin="round"/><path d="M1.5 8.4L8 11.7l6.5-3.3M1.5 12L8 15.3l6.5-3.3" fill="none" stroke="#2f63bd" stroke-width="2" stroke-linejoin="round"/></svg>
<div class="t" style="left:937.90px;top:357.75px;font-size:5.7px;color:#2d61b8;">任务</div>
<div class="a" style="left:940.20px;top:414.10px;width:14.80px;height:50.40px;background:#0b5fe6;border-radius:2.5px 0 0 2.5px"></div>
<svg class="a" style="left:944.40px;top:419.60px;" width="7.6" height="7.6" viewBox="0 0 16 16"><circle cx="8" cy="8" r="6.5" fill="none" stroke="#fff" stroke-width="1.9"/><path d="M5.2 8.8h5.6" stroke="#cfe0ff" stroke-width="1.2"/></svg>
<div class="t" style="left:943.20px;top:431.05px;width:10px;text-align:center;font-size:6px;color:#fff;"><span class="b">联</span></div>
<div class="t" style="left:943.20px;top:439.30px;width:10px;text-align:center;font-size:6px;color:#fff;"><span class="b">系</span></div>
<div class="t" style="left:943.20px;top:447.55px;width:10px;text-align:center;font-size:6px;color:#fff;"><span class="b">客</span></div>
<div class="t" style="left:943.20px;top:455.80px;width:10px;text-align:center;font-size:6px;color:#fff;"><span class="b">服</span></div>
</body></html>
